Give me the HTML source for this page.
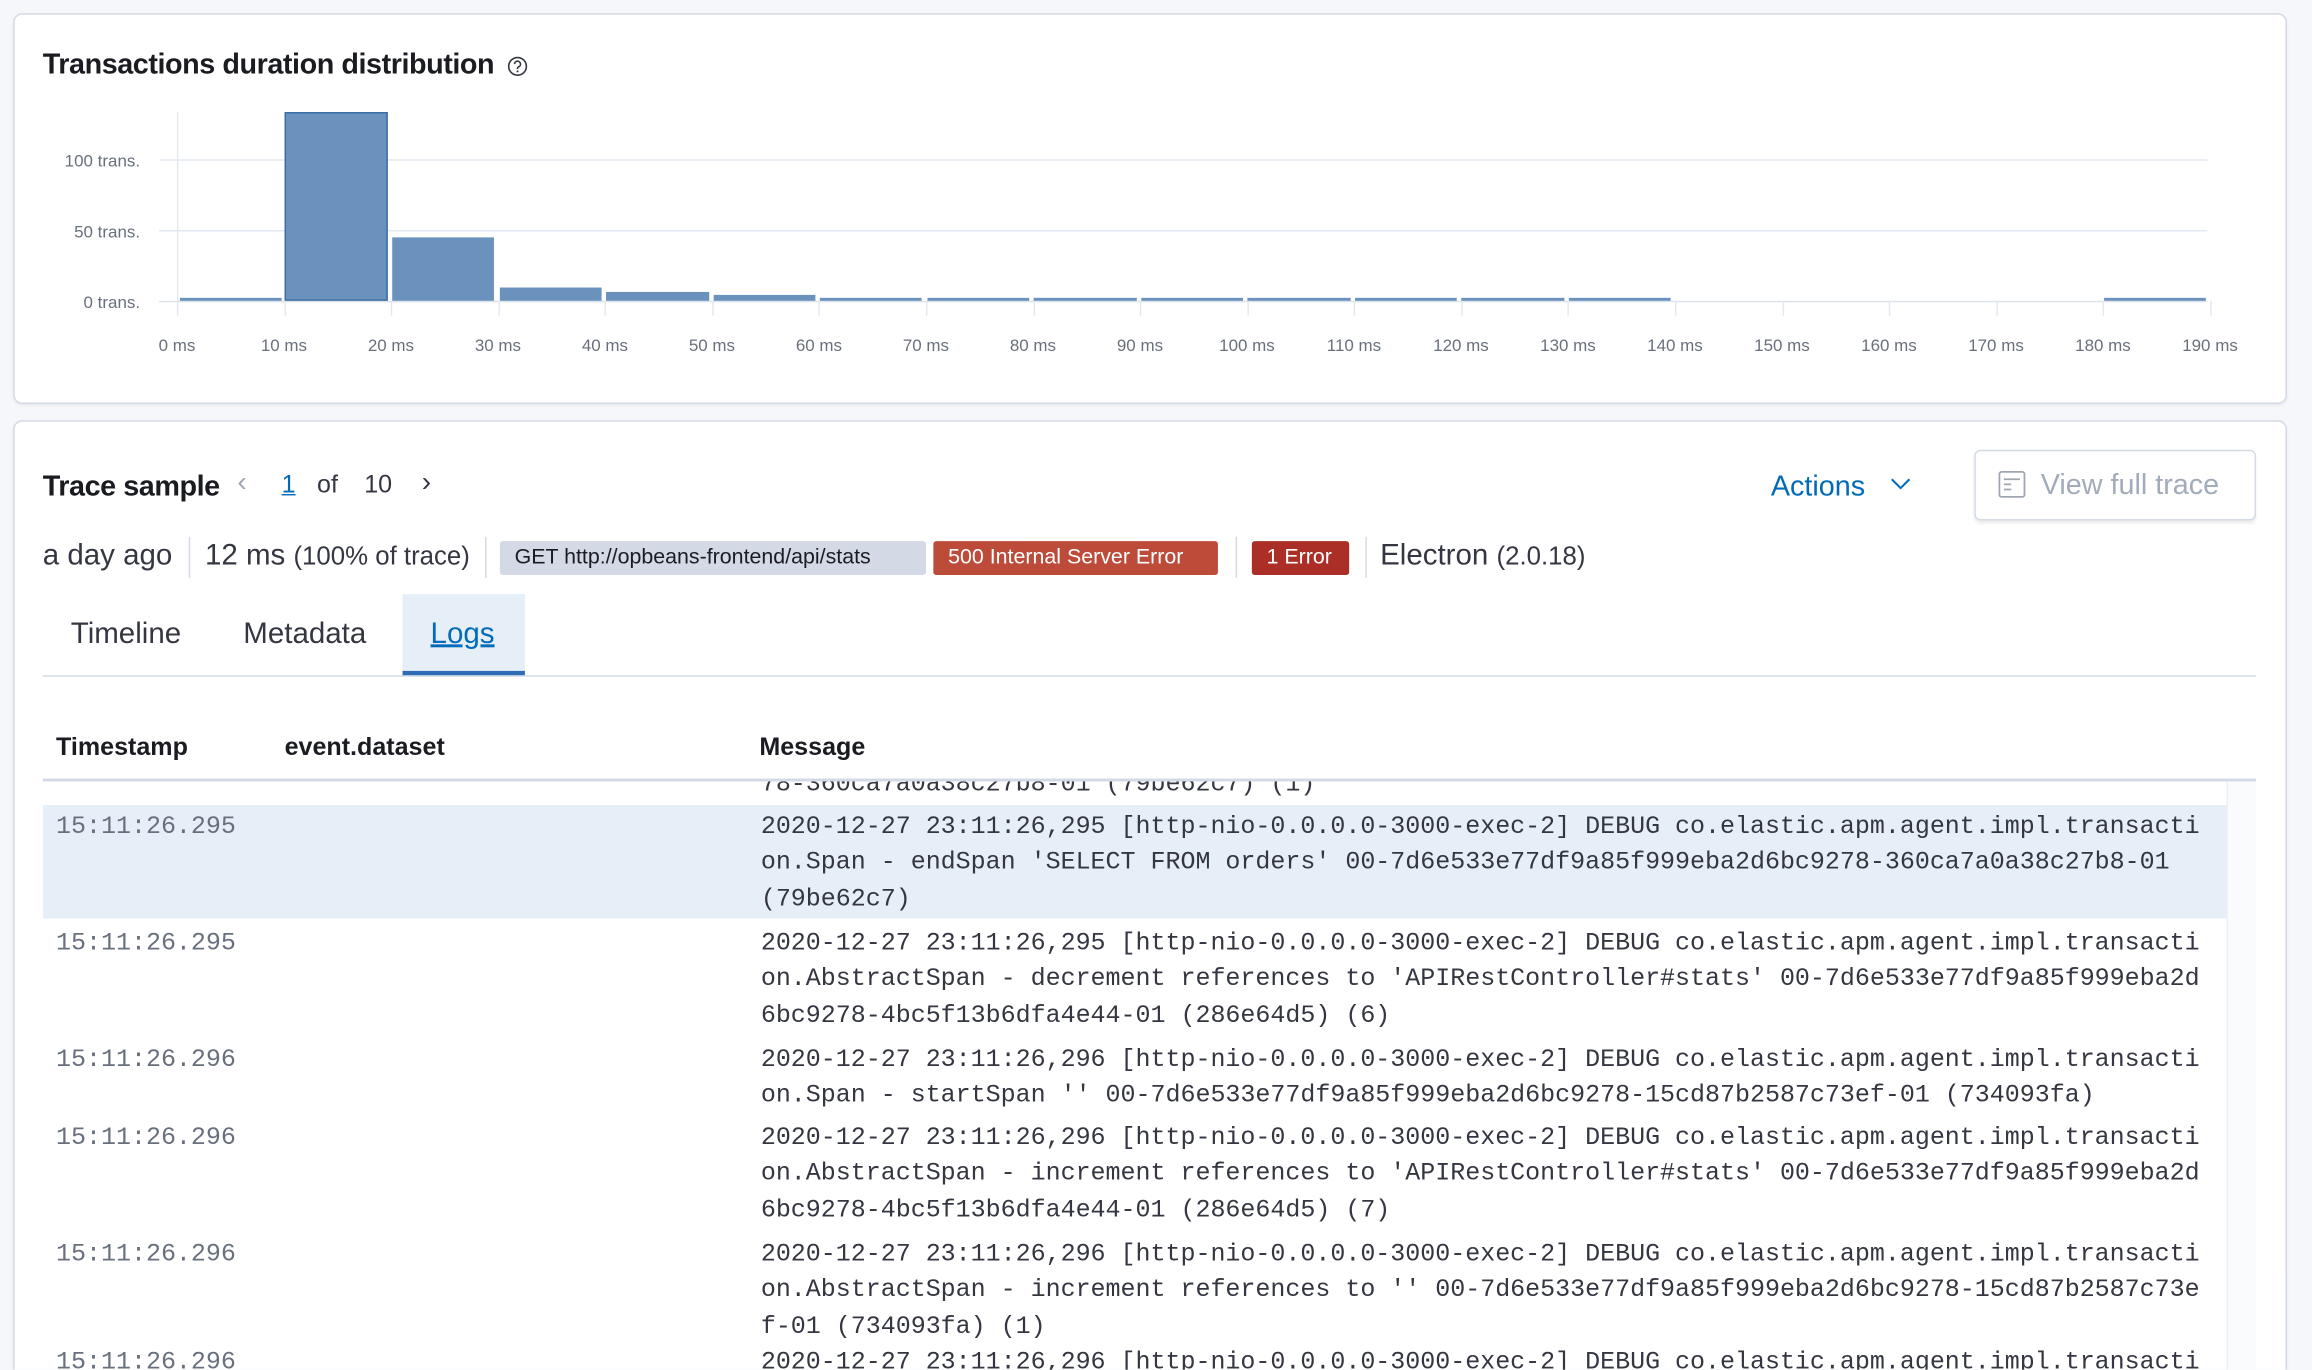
<!DOCTYPE html>
<html><head><meta charset="utf-8"><style>
html,body{margin:0;padding:0;width:2312px;height:1370px;overflow:hidden;background:#f5f7fa;}
#w{position:absolute;left:0;top:0;width:1568px;height:929px;transform:scale(1.47449);transform-origin:0 0;font-family:"Liberation Sans",sans-serif;color:#1a1c21;overflow:hidden}
.a{position:absolute;white-space:nowrap}
.card{position:absolute;background:#fff;border:1px solid #d3dae6;border-radius:6px;box-shadow:0 1px 2px rgba(0,0,0,.06)}
.yl{position:absolute;right:1473px;font-size:11.5px;color:#69707d;transform:translateY(-50%)}
.xl{position:absolute;top:229px;font-size:11.5px;color:#69707d;transform:translateX(-50%)}
.bar{position:absolute;background:#6a92bd}
.sep{position:absolute;width:1px;background:#d3dae6;top:364px;height:28px}
.badge{position:absolute;top:367px;height:23px;line-height:23px;font-size:14.5px;padding:0 10px;border-radius:2px;white-space:nowrap}
.mono{font-family:"Liberation Mono",monospace;font-size:16.95px;line-height:24.4px}
.ts{position:absolute;left:38px;color:#69707d}
.msg{position:absolute;left:516px;color:#343741}
</style></head><body><div id="w">
<div class="card" style="left:9px;top:9px;width:1540px;height:263px"></div>
<div class="a" style="left:29px;top:33px;font-size:19.5px;font-weight:bold;letter-spacing:-0.3px">Transactions duration distribution</div>
<svg class="a" style="left:344px;top:38px" width="14" height="14" viewBox="0 0 14 14"><circle cx="7" cy="7" r="6" fill="none" stroke="#343741" stroke-width="1.1"/><path d="M5 5.5a2 2 0 1 1 2.6 1.9c-.4.2-.6.5-.6.9v.6" fill="none" stroke="#343741" stroke-width="1.1"/><circle cx="7" cy="10.4" r=".7" fill="#343741"/></svg>
<div class="a" style="left:108px;top:108px;width:1389px;height:1px;background:#e3e8f0"></div>
<div class="a" style="left:108px;top:156px;width:1389px;height:1px;background:#e3e8f0"></div>
<div class="a" style="left:108px;top:204px;width:1389px;height:1px;background:#dde2ea"></div>
<div class="a" style="left:120px;top:76px;width:1px;height:136px;background:#e3e8f0"></div>
<div class="yl" style="top:110px">100 trans.</div>
<div class="yl" style="top:158px">50 trans.</div>
<div class="yl" style="top:206px">0 trans.</div>
<div id="ticks"></div>
<div class="bar" style="left:122px;width:69px;top:202px;height:2px"></div>
<div class="bar" style="left:193px;width:70px;top:76px;height:128px;box-shadow:inset 0 0 0 1px #3b6ea8"></div>
<div class="bar" style="left:266px;width:69px;top:161px;height:43px"></div>
<div class="bar" style="left:339px;width:69px;top:195px;height:9px"></div>
<div class="bar" style="left:411px;width:70px;top:198px;height:6px"></div>
<div class="bar" style="left:484px;width:69px;top:200px;height:4px"></div>
<div class="bar" style="left:556px;width:69px;top:202px;height:2px"></div>
<div class="bar" style="left:629px;width:69px;top:202px;height:2px"></div>
<div class="bar" style="left:701px;width:70px;top:202px;height:2px"></div>
<div class="bar" style="left:774px;width:69px;top:202px;height:2px"></div>
<div class="bar" style="left:846px;width:70px;top:202px;height:2px"></div>
<div class="bar" style="left:919px;width:69px;top:202px;height:2px"></div>
<div class="bar" style="left:991px;width:70px;top:202px;height:2px"></div>
<div class="bar" style="left:1064px;width:69px;top:202px;height:2px"></div>
<div class="bar" style="left:1427px;width:69px;top:202px;height:2px"></div>
<script>
var h='';for(var i=0;i<20;i++){var x=120+72.57*i;h+='<div class="a" style="left:'+x+'px;top:204px;width:1px;height:10px;background:#e3e8f0"></div><div class="xl" style="left:'+(x)+'px">'+(i*10)+' ms</div>';}
document.getElementById('ticks').innerHTML=h;
</script>
<div class="card" style="left:9px;top:285px;width:1540px;height:660px"></div>
<div class="a" style="left:29px;top:319px;font-size:19.5px;font-weight:bold;letter-spacing:-0.3px">Trace sample</div>
<div class="a" style="left:161px;top:317px;font-size:19px;color:#a0a6b0">&#x2039;</div>
<div class="a" style="left:191px;top:319px;font-size:17px;color:#006bb8;text-decoration:underline">1</div>
<div class="a" style="left:215px;top:319px;font-size:17px;color:#343741">of</div>
<div class="a" style="left:247px;top:319px;font-size:17px;color:#343741">10</div>
<div class="a" style="left:286px;top:317px;font-size:19px;color:#343741">&#x203A;</div>
<div class="a" style="left:1201px;top:319px;font-size:19.5px;color:#006bb8">Actions</div>
<svg class="a" style="left:1282px;top:323px" width="14" height="10" viewBox="0 0 14 10"><path d="M1 2l6 6 6-6" fill="none" stroke="#006bb8" stroke-width="1.4"/></svg>
<div class="a" style="left:1339px;top:305px;width:189px;height:46px;border:1px solid #d3dae6;border-radius:4px;box-shadow:0 2px 2px rgba(0,0,0,.08)"></div>
<svg class="a" style="left:1355px;top:319px" width="19" height="19" viewBox="0 0 19 19"><rect x="1" y="1" width="17" height="17" rx="1.5" fill="none" stroke="#a0a6b0" stroke-width="1.2"/><path d="M4 6h11M4 9.5h5M4 13h5" stroke="#a0a6b0" stroke-width="1.2"/></svg>
<div class="a" style="left:1384px;top:318px;font-size:19.5px;color:#a2abba">View full trace</div>
<div class="a" style="left:29px;top:366px;font-size:20px;color:#343741">a day ago</div>
<div class="sep" style="left:128px"></div>
<div class="a" style="left:139px;top:366px;font-size:20px;color:#343741">12 ms <span style="font-size:17.5px">(100% of trace)</span></div>
<div class="sep" style="left:329px"></div>
<div class="badge" style="left:339px;width:269px;background:#d3dae6;color:#1a1c21">GET http://opbeans-frontend/api/stats</div>
<div class="badge" style="left:633px;width:173px;background:#bd4b3a;color:#fff">500 Internal Server Error</div>
<div class="sep" style="left:838px"></div>
<div class="badge" style="left:849px;width:46px;background:#ab2f27;color:#fff">1 Error</div>
<div class="sep" style="left:926px"></div>
<div class="a" style="left:936px;top:366px;font-size:20px;color:#343741">Electron <span style="font-size:17.5px">(2.0.18)</span></div>
<div class="a" style="left:273px;top:403px;width:83px;height:55px;background:#e6eef8"></div>
<div class="a" style="left:273px;top:455px;width:83px;height:3px;background:#2f6cb5"></div>
<div class="a" style="left:29px;top:458px;width:1501px;height:1px;background:#d3dae6"></div>
<div class="a" style="left:48px;top:419px;font-size:20px;color:#343741">Timeline</div>
<div class="a" style="left:165px;top:419px;font-size:20px;color:#343741">Metadata</div>
<div class="a" style="left:292px;top:419px;font-size:20px;color:#006bb8;text-decoration:underline">Logs</div>
<div class="a" style="left:38px;top:497px;font-size:17px;font-weight:bold">Timestamp</div>
<div class="a" style="left:193px;top:497px;font-size:17px;font-weight:bold">event.dataset</div>
<div class="a" style="left:515px;top:497px;font-size:17px;font-weight:bold">Message</div>
<div class="a" style="left:1510px;top:529px;width:19px;height:420px;border-left:1px solid #eef0f3;background:#fafbfd"></div>
<div class="a" style="left:29px;top:529px;width:1481px;height:420px;overflow:hidden">
 <div class="a mono msg" style="left:487px;top:-8px">78-360ca7a0a38c27b8-01 (79be62c7) (1)</div>
 <div class="a" style="left:0;top:17px;width:1481px;height:77px;background:#e6eef8"></div>
 <div class="a mono ts" style="left:9px;top:21px">15:11:26.295</div>
 <div class="a mono msg" style="left:487px;top:21px">2020-12-27 23:11:26,295 [http-nio-0.0.0.0-3000-exec-2] DEBUG co.elastic.apm.agent.impl.transacti<br>on.Span - endSpan 'SELECT FROM orders' 00-7d6e533e77df9a85f999eba2d6bc9278-360ca7a0a38c27b8-01<br>(79be62c7)</div>
 <div class="a mono ts" style="left:9px;top:100px">15:11:26.295</div>
 <div class="a mono msg" style="left:487px;top:100px">2020-12-27 23:11:26,295 [http-nio-0.0.0.0-3000-exec-2] DEBUG co.elastic.apm.agent.impl.transacti<br>on.AbstractSpan - decrement references to 'APIRestController#stats' 00-7d6e533e77df9a85f999eba2d<br>6bc9278-4bc5f13b6dfa4e44-01 (286e64d5) (6)</div>
 <div class="a mono ts" style="left:9px;top:179px">15:11:26.296</div>
 <div class="a mono msg" style="left:487px;top:179px">2020-12-27 23:11:26,296 [http-nio-0.0.0.0-3000-exec-2] DEBUG co.elastic.apm.agent.impl.transacti<br>on.Span - startSpan '' 00-7d6e533e77df9a85f999eba2d6bc9278-15cd87b2587c73ef-01 (734093fa)</div>
 <div class="a mono ts" style="left:9px;top:232px">15:11:26.296</div>
 <div class="a mono msg" style="left:487px;top:232px">2020-12-27 23:11:26,296 [http-nio-0.0.0.0-3000-exec-2] DEBUG co.elastic.apm.agent.impl.transacti<br>on.AbstractSpan - increment references to 'APIRestController#stats' 00-7d6e533e77df9a85f999eba2d<br>6bc9278-4bc5f13b6dfa4e44-01 (286e64d5) (7)</div>
 <div class="a mono ts" style="left:9px;top:311px">15:11:26.296</div>
 <div class="a mono msg" style="left:487px;top:311px">2020-12-27 23:11:26,296 [http-nio-0.0.0.0-3000-exec-2] DEBUG co.elastic.apm.agent.impl.transacti<br>on.AbstractSpan - increment references to '' 00-7d6e533e77df9a85f999eba2d6bc9278-15cd87b2587c73e<br>f-01 (734093fa) (1)</div>
 <div class="a mono ts" style="left:9px;top:384px">15:11:26.296</div>
 <div class="a mono msg" style="left:487px;top:384px">2020-12-27 23:11:26,296 [http-nio-0.0.0.0-3000-exec-2] DEBUG co.elastic.apm.agent.impl.transacti</div>
</div>
<div class="a" style="left:29px;top:528px;width:1501px;height:2px;background:#d3dae6"></div>
</div></body></html>
